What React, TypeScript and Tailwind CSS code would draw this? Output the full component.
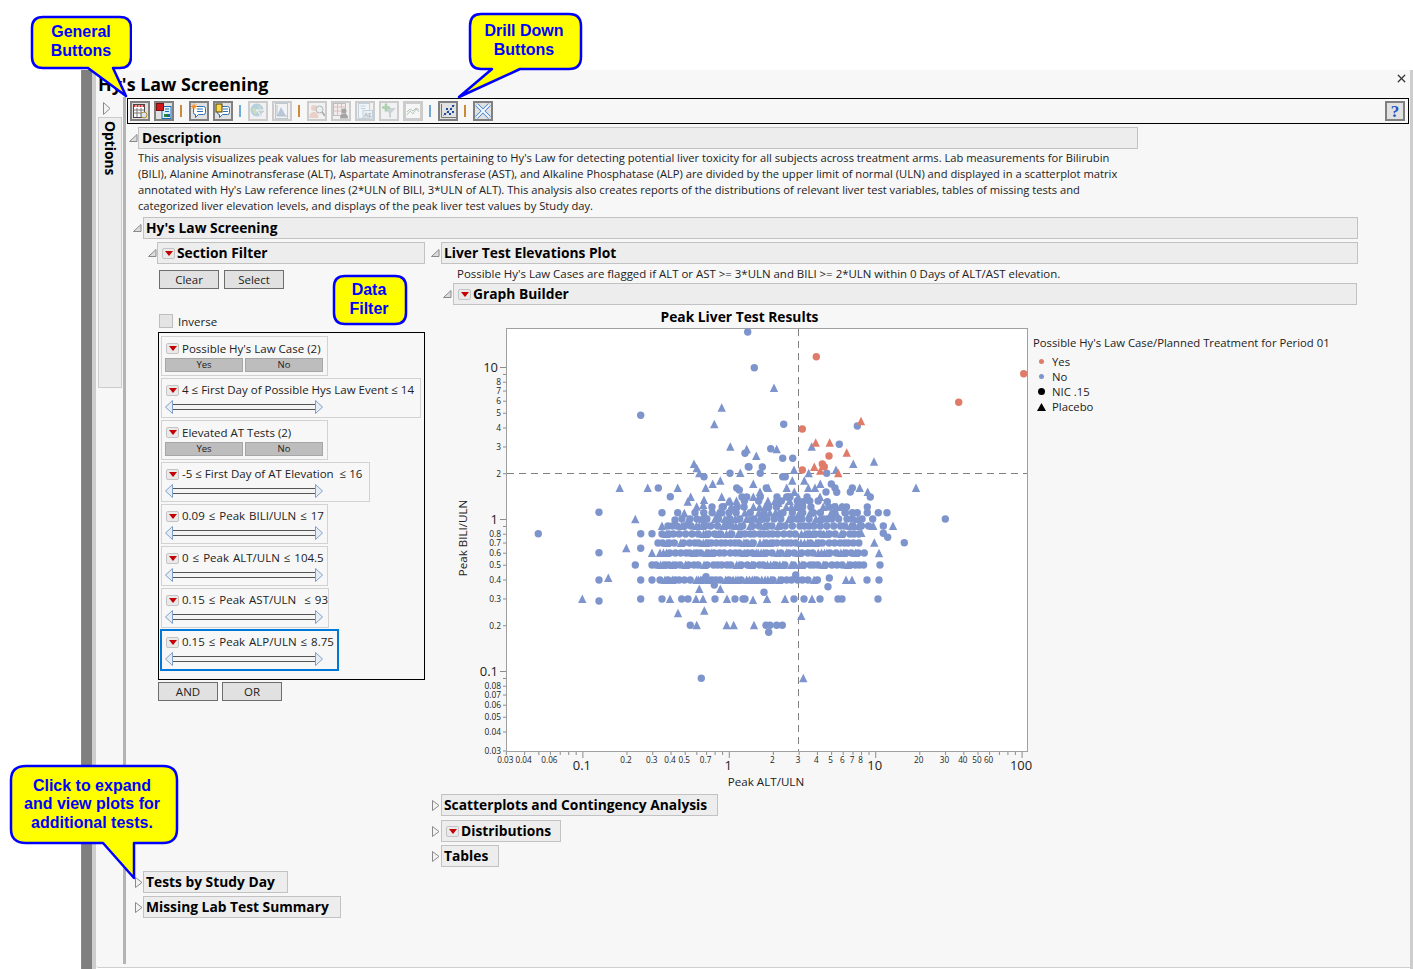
import { X } from 'lucide-react';
import type { ReactNode } from 'react';

// chart axes, in page pixels
const xPos = (v: number) => 729.3 + 146.4 * Math.log10(v);
const yPos = (v: number) => 519.5 - 152 * Math.log10(v);

type Pt = [number, number];

const blueCircles: Pt[] = [
  [747.7, 332], [754.3, 367.7], [783.7, 424.3], [857.3, 426], [839.3, 444.3], [770.7, 448.7], [745, 453.3], [782.7, 458.3],
  [792.7, 458.3], [749, 467], [762.3, 467], [760.3, 473.3], [782.7, 476.7], [785.3, 476.7], [826.7, 473.3], [831.3, 484],
  [835, 488], [836.7, 492.3], [826, 492], [852.3, 488], [850.3, 492], [870.3, 497], [766.3, 488], [746.7, 497], [786.7, 497],
  [790, 497], [803.3, 501.7], [827.3, 501.7], [834.7, 506.7], [842.3, 507], [867.3, 507], [797.3, 507], [857.3, 512.7],
  [867.3, 512.7], [878.3, 512.7], [887, 512.7], [845.3, 512.7], [945.3, 519], [872.7, 519], [827.3, 519], [883.3, 526],
  [883.3, 533.3], [887.7, 537.3], [904.3, 542.7], [640.7, 415.3], [538.3, 533.7], [599, 512.3], [599, 552.7], [640.7, 533.7],
  [652, 533.7], [640.7, 548.3], [658.3, 488], [670.3, 496.7], [662, 512.7], [677.7, 512.7], [675, 520], [748.3, 466.7],
  [730, 473.3], [704, 476.7], [736.7, 488], [739.3, 490], [723.3, 506.7], [731.7, 509.3], [703.3, 519], [706.7, 519],
  [599, 580], [640.7, 580], [652, 580], [635.3, 565], [652, 565], [599, 601], [640.7, 599], [662, 599], [681.7, 599], [688, 599],
  [715, 599], [735, 599], [745, 599], [743, 599], [794, 599], [804, 599], [820, 599], [838, 599], [842, 599], [878, 599], [714.3, 585],
  [706, 576.7], [690.3, 625.3], [701.3, 678.3], [766, 625.3], [770, 625.3], [776.7, 625.3], [782.3, 625.3], [768.7, 632.3],
  [764, 592.3], [828, 586.7], [829.3, 578], [795.7, 575], [867, 580], [879, 580], [880, 565],
];

const blueTriangles: Pt[] = [
  [774, 388], [811.7, 446.7], [746.7, 449.3], [776.7, 449.3], [756.3, 456], [853.3, 464], [874, 461.7], [794, 470], [836, 470],
  [808.7, 473.3], [740.3, 473], [792.3, 480.7], [804.3, 480.7], [753.3, 484], [820.3, 484], [808.3, 488], [815, 488], [859.7, 488],
  [916, 488], [786.7, 488], [768.3, 488], [760, 492], [794.3, 492], [867.7, 492], [753.3, 497], [820, 497], [778.3, 503], [836.3, 513],
  [893, 526], [873.3, 526], [861.3, 533], [874.3, 542.7], [879, 553.3], [721.7, 407.7], [714.3, 424.3], [730.3, 446.7], [694, 464],
  [696.7, 468.3], [699.3, 473.3], [720.3, 480.7], [712.7, 484], [705.7, 488], [619.7, 488], [647.7, 488], [677.7, 488], [690.7, 497],
  [721.7, 497], [687.7, 501.7], [728.3, 501.7], [704, 500], [696.7, 506.7], [703.3, 505], [684.3, 513.3], [635.3, 519.3], [688.3, 520],
  [728.3, 519.3], [662, 526], [626.3, 548.3], [582.3, 599], [608.3, 578], [670, 599], [696, 599], [703, 599], [727, 599], [753, 600],
  [767, 599], [785, 599], [812, 599], [699.3, 589], [720.3, 589], [678, 613.3], [704.3, 610.7], [696.7, 625.3], [726.7, 625.3],
  [733.7, 625.3], [754, 625.3], [801.3, 616], [803.3, 678.3], [652, 553], [846, 580], [852, 580],
];

const redCircles: Pt[] = [
  [816.3, 356.7], [1023.7, 373.7], [958.7, 402.3], [802.3, 429], [829, 456], [822.3, 464], [824.3, 466.7], [802.3, 470],
];
const redTriangles: Pt[] = [
  [861, 421.3], [815.7, 442.7], [829.7, 442.7], [846.7, 452.7], [814.3, 467], [820.3, 470.7], [838.3, 473.3],
];

// the packed rows in the middle of the cloud
const bands: [number, number, number, number][] = [
  [580, 660, 818, 4.2], [565, 656, 866, 4.2], [553, 660, 866, 4.2], [543, 658, 862, 4.4], [534, 662, 862, 4.4],
  [526, 668, 872, 5], [519, 682, 866, 5.6], [512.7, 695, 856, 7], [507, 712, 850, 8], [501, 730, 830, 10], [497, 742, 812, 12],
];
const bandCircles: Pt[] = [];
const bandTriangles: Pt[] = [];
let seed = 137;
bands.forEach(([y, x0, x1, step]) => {
  let x = x0;
  while (x < x1) {
    seed = (seed * 9301 + 49297) % 233280;
    const r = seed / 233280;
    (r < 0.33 ? bandTriangles : bandCircles).push([x, y]);
    x += step * (0.45 + r * 1.1);
  }
});

const triPoints = ([x, y]: Pt) => `${x - 4.2},${y + 4} ${x + 4.2},${y + 4} ${x},${y - 4.5}`;

const yTicks: [number, string, boolean][] = [
  [10, '10', true], [9, '', false], [8, '8', false], [7, '7', false], [6, '6', false], [5, '5', false], [4, '4', false], [3, '3', false], [2, '2', false],
  [1, '1', true], [0.9, '', false], [0.8, '0.8', false], [0.7, '0.7', false], [0.6, '0.6', false], [0.5, '0.5', false], [0.4, '0.4', false], [0.3, '0.3', false], [0.2, '0.2', false],
  [0.1, '0.1', true], [0.09, '', false], [0.08, '0.08', false], [0.07, '0.07', false], [0.06, '0.06', false], [0.05, '0.05', false], [0.04, '0.04', false], [0.03, '0.03', false],
];
const xTicks: [number, string, boolean][] = [
  [0.03, '0.03', false], [0.04, '0.04', false], [0.05, '', false], [0.06, '0.06', false], [0.07, '', false], [0.08, '', false], [0.09, '', false],
  [0.1, '0.1', true], [0.2, '0.2', false], [0.3, '0.3', false], [0.4, '0.4', false], [0.5, '0.5', false], [0.6, '', false], [0.7, '0.7', false], [0.8, '', false], [0.9, '', false],
  [1, '1', true], [2, '2', false], [3, '3', false], [4, '4', false], [5, '5', false], [6, '6', false], [7, '7', false], [8, '8', false], [9, '', false],
  [10, '10', true], [20, '20', false], [30, '30', false], [40, '40', false], [50, '50', false], [60, '60', false], [70, '', false], [80, '', false], [90, '', false], [100, '100', true],
];

const Chart = () => (
  <svg width={582} height={466} viewBox="450 326 582 466" className="shrink-0">
    <rect x={506.5} y={328.5} width={521} height={423} fill="#fff" stroke="#a0a0a0" />
    {yTicks.map(([v, label, major]) => (
      <g key={v}>
        <line x1={major ? 500 : 503} x2={506} y1={yPos(v)} y2={yPos(v)} stroke="#8c8c8c" />
        {label && (
          <text x={major ? 498 : 501} y={yPos(v) + (major ? 4.5 : 3)} textAnchor="end" fontSize={major ? 13 : 8.4} fill="#222">{label}</text>
        )}
      </g>
    ))}
    {xTicks.map(([v, label, major]) => (
      <g key={v}>
        <line x1={xPos(v)} x2={xPos(v)} y1={752} y2={major ? 758 : 755} stroke="#8c8c8c" />
        {label && (
          <text x={xPos(v) - 1} y={major ? 770 : 763} textAnchor="middle" fontSize={major ? 13 : 8.2} fill="#222">{label}</text>
        )}
      </g>
    ))}
    <text x={766} y={785.5} textAnchor="middle" fontSize={11.6} fill="#222">Peak ALT/ULN</text>
    <text transform="translate(467 538) rotate(-90)" textAnchor="middle" fontSize={11.6} fill="#222">Peak BILI/ULN</text>
    <line x1={507} x2={1027} y1={473.5} y2={473.5} stroke="#7f7f7f" strokeDasharray="7 5" />
    <line x1={798.5} x2={798.5} y1={329} y2={751} stroke="#7f7f7f" strokeDasharray="7 5" />
    <g fill="#7d94cc">
      {[...blueCircles, ...bandCircles].map(([x, y], i) => <circle key={i} cx={x} cy={y} r={3.7} />)}
      {[...blueTriangles, ...bandTriangles].map((p, i) => <polygon key={i} points={triPoints(p)} />)}
    </g>
    <g fill="#e07b6a">
      {redCircles.map(([x, y], i) => <circle key={i} cx={x} cy={y} r={3.7} />)}
      {redTriangles.map((p, i) => <polygon key={i} points={triPoints(p)} />)}
    </g>
  </svg>
);

const Legend = () => (
  <div className="pt-[9px] pl-px text-[11.3px] leading-[16px] text-[#222] whitespace-nowrap">
    <div>Possible Hy's Law Case/Planned Treatment for Period 01</div>
    <div className="mt-[3px] flex flex-col">
      {[
        ['Yes', <span key="y" className="w-[5px] h-[5px] rounded-full bg-[#e07b6a]" />],
        ['No', <span key="n" className="w-[5px] h-[5px] rounded-full bg-[#7d94cc]" />],
        ['NIC .15', <span key="c" className="w-[7px] h-[7px] rounded-full bg-black" />],
        ['Placebo', <svg key="t" width={9} height={8} viewBox="0 0 9 8"><polygon points="0,8 9,8 4.5,0" fill="#000" /></svg>],
      ].map(([label, mark], i) => (
        <div key={i} className="flex items-center h-[15px]">
          <div className="w-[19px] flex justify-center pr-[2px]">{mark}</div>
          <div>{label}</div>
        </div>
      ))}
    </div>
  </div>
);

const Open = () => (
  <svg width={9} height={8} viewBox="0 0 9 8" className="shrink-0">
    <polygon points="8,0.5 8,7.5 0.5,7.5" fill="#dcdcdc" stroke="#8a8a8a" />
  </svg>
);
const Shut = () => (
  <svg width={8} height={11} viewBox="0 0 8 11" className="shrink-0">
    <polygon points="0.5,0.5 7,5.5 0.5,10.5" fill="#f4f4f4" stroke="#8a8a8a" />
  </svg>
);

const MenuBtn = ({ className = '' }: { className?: string }) => (
  <span className={`inline-flex items-center justify-center w-[13px] h-[11px] shrink-0 bg-[#e9e9e9] border border-[#c4c4c4] rounded-[2px] ${className}`}>
    <svg width={8} height={5} viewBox="0 0 8 5"><polygon points="0,0 8,0 4,5" fill="#c40000" /></svg>
  </span>
);

const Bar = ({ title, menu, className }: { title: string; menu?: boolean; className: string }) => (
  <div className={`flex items-center h-[22px] bg-[#ededed] border border-[#c2c2c2] pl-[2px] text-[13.8px] font-bold text-black whitespace-nowrap ${className}`}>
    {menu && <MenuBtn className="ml-[2px] mr-[2px]" />}
    {title}
  </div>
);

const GrayBtn = ({ children, className }: { children: ReactNode; className: string }) => (
  <div className={`flex items-center justify-center h-[19px] bg-[#e1e1e1] border border-[#6e6e6e] text-[11.5px] text-[#222] ${className}`}>{children}</div>
);

const Slider = () => (
  <svg width={158} height={14} viewBox="0 0 158 14" className="block">
    <rect x={7.5} y={4.5} width={143} height={5} fill="#f4f4f4" stroke="#555" />
    <polygon points="0.5,7 7.5,0.5 7.5,13.5" fill="#e6edf5" stroke="#7f9fc4" />
    <polygon points="157.5,7 150.5,0.5 150.5,13.5" fill="#e6edf5" stroke="#7f9fc4" />
  </svg>
);

const FilterCard = ({ label, width, yesNo, spaced, selected }: { label: string; width: string; yesNo?: boolean; spaced?: boolean; selected?: boolean }) => (
  <div className={`${width} ${selected ? 'h-[42px] -ml-px -mt-px border-2 border-[#0078d7] pl-[3px] pt-[3px]' : 'h-[40px] border border-[#d2d2d2] pl-[3px] pt-[3px]'} shrink-0`}>
    <div className={`flex items-center h-[16px] pl-px text-[11.5px] whitespace-pre text-[#222] ${spaced ? '[word-spacing:1px]' : ''}`}>
      <MenuBtn className="mr-[3px]" />
      <span className={yesNo ? 'pt-[2px]' : ''}>{label}</span>
    </div>
    {yesNo ? (
      <div className="flex gap-[2px] mt-[2px]">
        {['Yes', 'No'].map(t => (
          <div key={t} className="w-[78px] h-[14px] flex items-center justify-center bg-[#bdbdbd] border border-[#a6a6a6] text-[9.5px] text-[#222]">{t}</div>
        ))}
      </div>
    ) : (
      <div className="mt-[2px]"><Slider /></div>
    )}
  </div>
);

// toolbar icons, 16 x 16
const icons: ReactNode[] = [
  <g key="1">
    <rect x={1.5} y={1.5} width={11} height={13} fill="#fff" stroke="#444" />
    <path d="M1.5 3h11" stroke="#c33" strokeWidth={2} strokeDasharray="2 1" />
    <path d="M1.5 7h11M1.5 10h11M5 5v9M9 5v9" stroke="#777" />
    <circle cx={12} cy={12} r={3} fill="#cfe6f5" stroke="#b98a2c" />
  </g>,
  <g key="2">
    <rect x={6} y={3.5} width={9} height={12} fill="#dff1fb" stroke="#1a6db0" />
    <rect x={0.5} y={0.5} width={7} height={7} fill="#d01818" stroke="#7a1010" />
    <rect x={8} y={11} width={3} height={3} fill="#2a8a2a" />
    <rect x={11} y={11} width={3} height={3} fill="#1a5fb0" />
    <path d="M9 6h4M9 8.5h4" stroke="#1a6db0" />
  </g>,
  <g key="3">
    <path d="M3.5 3.5h9a2 2 0 0 1 2 2v4a2 2 0 0 1-2 2h-5l-3 3v-3a2 2 0 0 1-2-2v-5z" fill="#fff" stroke="#2b73b8" />
    <path d="M6 6h6M6 8.5h6" stroke="#2b73b8" />
    <path d="M3 0.5v6M0 3.5h6M1 1.5l4 4M5 1.5l-4 4" stroke="#f08a1d" />
  </g>,
  <g key="4">
    <path d="M4.5 3.5h8a2 2 0 0 1 2 2v4a2 2 0 0 1-2 2h-5l-3 3v-3a2 2 0 0 1-2-2v-4z" fill="#fff" stroke="#2b73b8" />
    <path d="M8 6h5M8 8.5h5" stroke="#2b73b8" />
    <rect x={1} y={1} width={6} height={8} fill="#ffd84a" stroke="#4a3a10" />
  </g>,
  <g key="5">
    <circle cx={7} cy={7} r={6.5} fill="#5f9fc0" />
    <path d="M2 5l4 1 1 4-3 1zM8 2l3 2-2 2z" fill="#9cc46c" />
    <path d="M6 7h10l-4 4v4l-2-1v-3z" fill="#8fa4b0" stroke="#fff" />
  </g>,
  <g key="6">
    <rect x={1.5} y={0.5} width={12} height={15} fill="#f4f8fc" stroke="#6a90b0" />
    <path d="M3 13l4-9 5 9z" fill="#5c8cbc" />
    <path d="M3 2v11h11" stroke="#777" fill="none" />
  </g>,
  <g key="7">
    <circle cx={5} cy={5} r={3} fill="#e0a090" />
    <path d="M0.5 15c0-5 2-6 4.5-6s4 1 4.5 6z" fill="#e0a090" />
    <circle cx={10.5} cy={6.5} r={3.5} fill="#dfeef8" stroke="#555" />
    <path d="M13 9l3 4" stroke="#555" strokeWidth={2} />
  </g>,
  <g key="8">
    <rect x={0.5} y={0.5} width={12} height={12} fill="#f5e8e4" stroke="#777" />
    <path d="M0.5 4h12M0.5 8h12M4.5 0.5v12M8.5 0.5v12" stroke="#b77" />
    <circle cx={11} cy={8} r={2.5} fill="#333" />
    <path d="M7 15.5c0-4 2-5 4-5s4 1 4 5z" fill="#333" />
  </g>,
  <g key="9">
    <rect x={1.5} y={0.5} width={11} height={15} fill="#f6fafd" stroke="#7aa0c4" />
    <path d="M3.5 3h5M3.5 5.5h5" stroke="#7aa0c4" />
    <rect x={6} y={7.5} width={9.5} height={7.5} fill="#e4eff8" stroke="#7aa0c4" />
    <text x={10.7} y={13.6} textAnchor="middle" fontSize={6} fontWeight={700} fill="#3a6a96">AE</text>
  </g>,
  <g key="10">
    <path d="M3 5h12l-5 5v5l-2-1v-4z" fill="#8fa4b0" />
    <path d="M5 0.5v8M1 4.5h8" stroke="#3fa24a" strokeWidth={2.6} />
  </g>,
  <g key="11">
    <rect x={0.5} y={0.5} width={15} height={15} fill="#fff" stroke="#999" />
    <path d="M2 12l3-4 3 3 3-5 3 3" fill="none" stroke="#5a9a5a" />
    <path d="M2 9l3-3 3 2 3-3 3 2" fill="none" stroke="#777" />
  </g>,
  <g key="12">
    <path d="M1.5 1v13.5H16" fill="none" stroke="#777" />
    <path d="M3 13L15 2" stroke="#999" strokeDasharray="2 1.5" />
    <g fill="#1a4aa8">
      <rect x={4} y={10} width={2} height={2} /><rect x={7} y={8} width={2} height={2} /><rect x={9} y={10} width={2} height={2} />
      <rect x={6} y={5} width={2} height={2} /><rect x={10} y={5} width={2} height={2} /><rect x={12} y={2} width={2} height={2} />
      <rect x={12} y={8} width={2} height={2} />
    </g>
  </g>,
  <g key="13">
    <path d="M1.5 1.5l13 13M14.5 1.5l-13 13" stroke="#3f80d0" strokeWidth={3.6} />
    <path d="M1.5 1.5l13 13M14.5 1.5l-13 13" stroke="#f4f8fc" strokeWidth={2} />
  </g>,
];

const ToolBtn = ({ n, off }: { n: number; off?: boolean }) => (
  <div className={`w-[20px] h-[20px] flex items-center justify-center border-2 ${off ? 'bg-[#f1f1f1] border-[#cccccc]' : 'bg-[#e1e1e1] border-[#808080]'}`}>
    <svg width={16} height={16} viewBox="0 0 16 16" className={off ? 'opacity-40' : ''}>{icons[n]}</svg>
  </div>
);

const Sep = ({ tone }: { tone: 'o' | 'b' }) => (
  <div className={`ml-[6px] mr-[7px] w-[2px] h-[12px] ${tone === 'o' ? 'bg-[#c98a3a]' : 'bg-[#6fa9d8]'}`} />
);

const Toolbar = () => (
  <div className="flex items-center w-[1282px] h-[26px] mt-px border border-black pl-[2px]">
    <div className="flex gap-[4px]"><ToolBtn n={0} /><ToolBtn n={1} /></div>
    <Sep tone="o" />
    <div className="flex gap-[4px]"><ToolBtn n={2} /><ToolBtn n={3} /></div>
    <Sep tone="b" />
    <div className="flex gap-[4px]"><ToolBtn n={4} off /><ToolBtn n={5} off /></div>
    <Sep tone="o" />
    <div className="flex gap-[4px]"><ToolBtn n={6} off /><ToolBtn n={7} off /><ToolBtn n={8} off /><ToolBtn n={9} off /><ToolBtn n={10} off /></div>
    <Sep tone="b" />
    <ToolBtn n={11} />
    <Sep tone="o" />
    <ToolBtn n={12} />
    <div className="ml-auto mr-[3px] w-[20px] h-[20px] flex items-center justify-center bg-[#e1e1e1] border-2 border-[#808080] font-['Liberation_Serif',serif] font-bold text-[17px] leading-none text-[#1f55c4]">?</div>
  </div>
);

const filters = [
  { label: "Possible Hy's Law Case (2)", width: 'w-[167px]', yesNo: true },
  { label: '4 ≤ First Day of Possible Hys Law Event ≤ 14', width: 'w-[260px]' },
  { label: 'Elevated AT Tests (2)', width: 'w-[167px]', yesNo: true },
  { label: '-5 ≤ First Day of AT Elevation  ≤ 16', width: 'w-[209px]' },
  { label: '0.09 ≤ Peak BILI/ULN ≤ 17', width: 'w-[167px]', spaced: true },
  { label: '0 ≤ Peak ALT/ULN ≤ 104.5', width: 'w-[167px]', spaced: true },
  { label: '0.15 ≤ Peak AST/ULN  ≤ 93', width: 'w-[168px]', spaced: true },
  { label: '0.15 ≤ Peak ALP/ULN ≤ 8.75', width: 'w-[179px]', spaced: true, selected: true },
];

const FilterPanel = () => (
  <div className="w-[277px] shrink-0">
    <div className="flex items-center">
      <div className="w-[9px]"><Open /></div>
      <Bar title="Section Filter" menu className="w-[268px]" />
    </div>
    <div className="flex gap-[5px] mt-[6px] ml-[11px]">
      <GrayBtn className="w-[60px]">Clear</GrayBtn>
      <GrayBtn className="w-[60px]">Select</GrayBtn>
    </div>
    <div className="flex items-center h-[14px] mt-[25px] ml-[11px] text-[11.5px] text-[#222]">
      <div className="w-[14px] h-[14px] bg-[#e4e4e4] border border-[#bdbdbd] mr-[5px]" />
      <span className="pt-[2px]">Inverse</span>
    </div>
    <div className="flex flex-col gap-[2px] w-[267px] h-[348px] mt-[4px] ml-[10px] border border-black pl-[2px] pt-[3px]">
      {filters.map(f => <FilterCard key={f.label} {...f} />)}
    </div>
    <div className="flex gap-[4px] mt-[2px] ml-[10px]">
      <GrayBtn className="w-[60px]">AND</GrayBtn>
      <GrayBtn className="w-[60px]">OR</GrayBtn>
    </div>
  </div>
);

const PlotPanel = () => (
  <div className="w-[927px] ml-[6px] shrink-0">
    <div className="flex items-center">
      <div className="w-[10px]"><Open /></div>
      <Bar title="Liver Test Elevations Plot" className="w-[917px]" />
    </div>
    <div className="ml-[26px] mt-[2px] h-[16px] text-[11.45px] leading-[16px] text-[#222] whitespace-nowrap">
      Possible Hy's Law Cases are flagged if ALT or AST &gt;= 3*ULN and BILI &gt;= 2*ULN within 0 Days of ALT/AST elevation.
    </div>
    <div className="flex items-center ml-[12px] mt-px">
      <div className="w-[10px]"><Open /></div>
      <Bar title="Graph Builder" menu className="w-[904px]" />
    </div>
    <div className="w-[579px] ml-[19px] mt-[3px] h-[18px] text-center text-[13.8px] font-bold leading-[18px] text-black">Peak Liver Test Results</div>
    <div className="flex ml-[19px]">
      <Chart />
      <Legend />
    </div>
    <div className="ml-px mt-[2px]">
      <div className="flex items-center"><div className="w-[9px]"><Shut /></div><Bar title="Scatterplots and Contingency Analysis" className="w-[277px]" /></div>
      <div className="flex items-center mt-[4px]"><div className="w-[9px]"><Shut /></div><Bar title="Distributions" menu className="w-[120px]" /></div>
      <div className="flex items-center mt-[3px]"><div className="w-[9px]"><Shut /></div><Bar title="Tables" className="w-[58px]" /></div>
    </div>
  </div>
);

const Callout = ({ className, width, height, cx, d, lines }: { className: string; width: number; height: number; cx: number; d: string; lines: [string, number][] }) => (
  <svg width={width} height={height} viewBox={`0 0 ${width} ${height}`} className={`absolute ${className}`}>
    <path d={d} fill="#ffff00" stroke="#0000ff" strokeWidth={2.5} strokeLinejoin="round" />
    {lines.map(([t, y]) => (
      <text key={t} x={cx} y={y} textAnchor="middle" fill="#0000ff" fontSize={16} fontWeight={700} fontFamily="'Liberation Sans', sans-serif">{t}</text>
    ))}
  </svg>
);

export default function App() {
  return (
    <div className="relative w-[1413px] h-[969px] overflow-hidden bg-white font-['Open_Sans',sans-serif]">
      <div className="h-[70px]" />
      <div className="flex h-[899px]">
        <div className="w-[81px] shrink-0" />
        <div className="w-[11px] shrink-0 bg-[#7f7f7f] border-l border-[#6d8fb3]" />
        <div className="w-[4px] shrink-0 bg-[#cdcdcd]" />
        <div className="flex flex-col w-[1314px] h-[898px] bg-[#f7f7f7] border-b border-[#cfcfcf] rounded-bl-[3px]">
          <div className="flex items-center justify-between h-[27px] pl-[2px] pr-[2px] pt-[2px] text-[17.9px] font-bold text-black shrink-0">
            Hy's Law Screening
            <X size={13} strokeWidth={2.4} className="text-[#333] -mt-[12px]" />
          </div>
          <div className="flex flex-1 min-h-0">
            <div className="w-[27px] shrink-0 pl-[2px]">
              <div className="pl-[5px] pt-[5px] h-[20px]"><svg width={8} height={13} viewBox="0 0 8 13"><polygon points="0.5,0.5 7,6.5 0.5,12.5" fill="#f4f4f4" stroke="#8a8a8a" /></svg></div>
              <div className="w-[24px] h-[271px] bg-[#ededed] border border-[#cccccc] flex justify-center pt-[3px]">
                <span className="[writing-mode:vertical-rl] text-[13.8px] font-bold text-black">Options</span>
              </div>
            </div>
            <div className="w-[3px] shrink-0 bg-[#b4b4b4] mb-[3px]" />
            <div className="flex-1 min-w-0 pl-px">
              <Toolbar />
              <div className="flex items-center mt-[3px] ml-[2px]">
                <div className="w-[9px]"><Open /></div>
                <Bar title="Description" className="w-[1000px] pl-[3px]" />
              </div>
              <div className="ml-[11px] mt-px text-[11.18px] leading-[16px] text-[#222] whitespace-nowrap">
                <div>This analysis visualizes peak values for lab measurements pertaining to Hy's Law for detecting potential liver toxicity for all subjects across treatment arms. Lab measurements for Bilirubin</div>
                <div>(BILI), Alanine Aminotransferase (ALT), Aspartate Aminotransferase (AST), and Alkaline Phosphatase (ALP) are divided by the upper limit of normal (ULN) and displayed in a scatterplot matrix</div>
                <div>annotated with Hy's Law reference lines (2*ULN of BILI, 3*ULN of ALT). This analysis also creates reports of the distributions of relevant liver test variables, tables of missing tests and</div>
                <div>categorized liver elevation levels, and displays of the peak liver test values by Study day.</div>
              </div>
              <div className="flex items-center mt-[3px] ml-[6px]">
                <div className="w-[10px]"><Open /></div>
                <Bar title="Hy's Law Screening" className="w-[1215px]" />
              </div>
              <div className="flex mt-[3px] ml-[21px]">
                <FilterPanel />
                <PlotPanel />
              </div>
              <div className="flex flex-col gap-[3px] mt-[4px] ml-[8px]">
                <div className="flex items-center"><div className="w-[8px]"><Shut /></div><Bar title="Tests by Study Day" className="w-[145px]" /></div>
                <div className="flex items-center"><div className="w-[8px]"><Shut /></div><Bar title="Missing Lab Test Summary" className="w-[198px]" /></div>
              </div>
            </div>
          </div>
        </div>
        <div className="w-[3px] shrink-0 bg-[#cdcdcd]" />
      </div>

      <Callout
        className="left-[28px] top-[13px]"
        width={104}
        height={87}
        cx={53}
        d="M15 4H92Q103 4 103 15V44Q103 55 92 55H85L98 83L60 55H15Q4 55 4 44V15Q4 4 15 4Z"
        lines={[['General', 24], ['Buttons', 43]]}
      />
      <Callout
        className="left-[455px] top-[10px]"
        width={130}
        height={90}
        cx={69}
        d="M26 4H114Q126 4 126 16V47Q126 59 114 59H65L4 87L37 59H26Q15 59 15 47V16Q15 4 26 4Z"
        lines={[['Drill Down', 26], ['Buttons', 45]]}
      />
      <Callout
        className="left-[330px] top-[272px]"
        width={80}
        height={55}
        cx={39}
        d="M15 4H65Q76 4 76 15V41Q76 52 65 52H15Q4 52 4 41V15Q4 4 15 4Z"
        lines={[['Data', 23], ['Filter', 42]]}
      />
      <Callout
        className="left-[7px] top-[762px]"
        width={174}
        height={120}
        cx={85}
        d="M19 4H156Q170 4 170 18V67Q170 81 156 81H127V116L96 81H19Q4 81 4 67V18Q4 4 19 4Z"
        lines={[['Click to expand', 29], ['and view plots for', 47], ['additional tests.', 66]]}
      />
    </div>
  );
}
